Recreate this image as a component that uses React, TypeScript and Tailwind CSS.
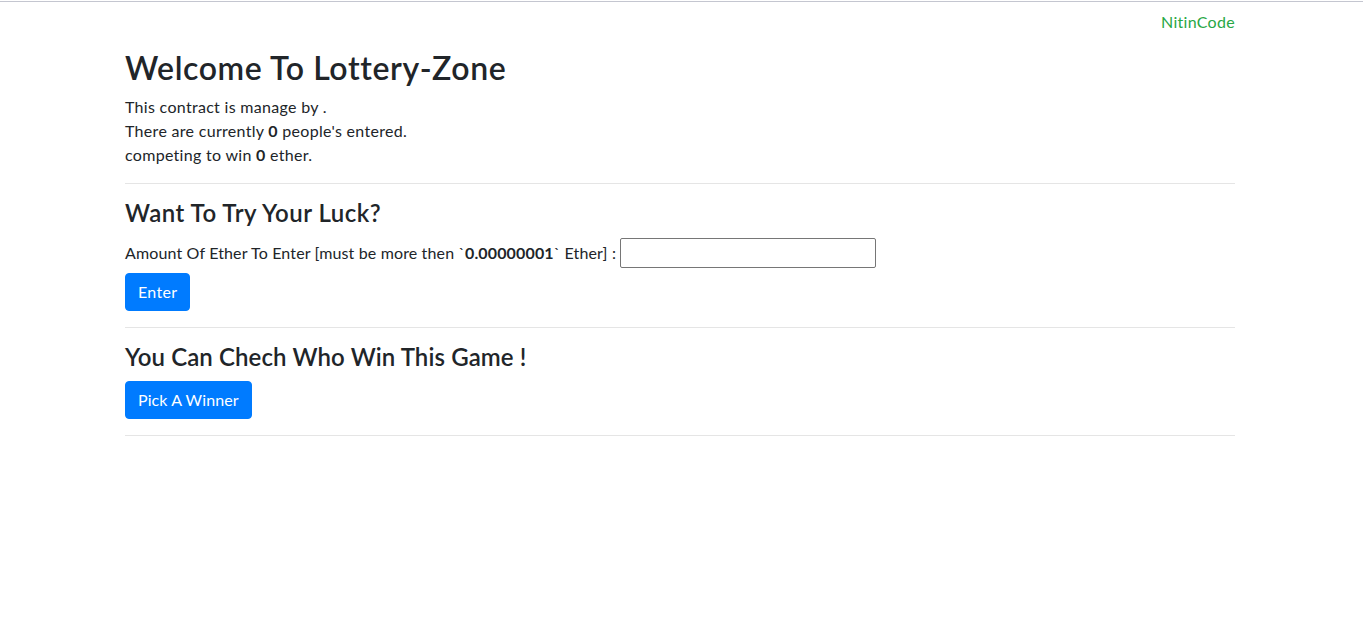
export default function App() {
  return (
    <div className="min-h-screen bg-white text-[#212529] font-['Lato',sans-serif] text-[16px] leading-6">
      <div className="pt-px">
        <div className="h-px bg-[#c4c6d0]" />
      </div>
      <div className="ml-[125px] w-[1110px]">
        <div className="flex justify-end pt-[8px] pb-[9px]">
          <span className="text-[#28a745] tracking-[0.3px]">NitinCode</span>
        </div>
        <h1 className="text-[32px] font-semibold leading-[38px] mb-2 mt-[6px] tracking-[0.6px]">
          Welcome To Lottery-Zone
        </h1>
        <div className="tracking-[0.3px]">
          <p>This contract is manage by .</p>
          <p>
            There are currently <b>0</b> people's entered.
          </p>
          <p>
            competing to win <b>0</b> ether.
          </p>
        </div>
        <hr className="my-4 border-[#e5e5e5]" />
        <h4 className="text-[24px] font-semibold leading-[25px] mb-[12px] tracking-[0.5px]">Want To Try Your Luck?</h4>
        <div className="flex items-center h-[32px] tracking-[0.14px]">
          <span>
            Amount Of Ether To Enter [must be more then `<b>0.00000001</b>` Ether] :
          </span>
          <input className="ml-1 w-[256px] h-[30px] border border-[#767676] rounded-[2px] px-1" />
        </div>
        <button className="mt-[4px] bg-[#007bff] text-white rounded-[4px] px-3 h-[38px] border border-[#007bff] tracking-[0.3px]">
          Enter
        </button>
        <hr className="my-4 border-[#e5e5e5]" />
        <h4 className="text-[24px] font-semibold leading-[25px] mb-[12px] tracking-[0.1px]">
          You Can Chech Who Win This Game !
        </h4>
        <button className="bg-[#007bff] text-white rounded-[4px] px-3 h-[38px] border border-[#007bff] tracking-[0.1px]">
          Pick A Winner
        </button>
        <hr className="my-4 border-[#e5e5e5]" />
      </div>
    </div>
  );
}
